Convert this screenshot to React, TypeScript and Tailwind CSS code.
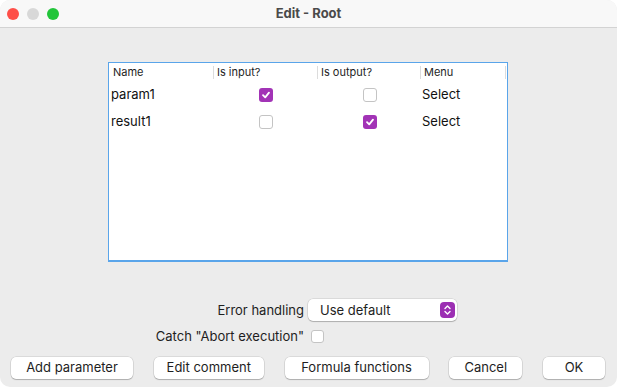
import React from "react";

const font = { fontFamily: "Inter, 'Open Sans', 'Liberation Sans', sans-serif" };

function Check({ checked }: { checked: boolean }) {
  if (checked) {
    return (
      <div className="w-[14px] h-[14px] rounded-[3px] bg-[#a233b6] flex items-center justify-center">
        <svg width="10" height="10" viewBox="0 0 10 10">
          <path d="M2 5.2 L4.2 7.4 L8 2.6" fill="none" stroke="white" strokeWidth="1.8" strokeLinecap="round" strokeLinejoin="round" />
        </svg>
      </div>
    );
  }
  return <div className="w-[14px] h-[14px] rounded-[3px] bg-white border border-[#c4c4c4]" />;
}

function Btn({ label, w }: { label: string; w: string }) {
  return (
    <div
      className={`${w} h-[22px] bg-white rounded-[5px] flex items-center justify-center text-[13px] text-[#1e1e1e] shadow-[0_0_0_0.5px_rgba(0,0,0,0.15),0_1px_1px_rgba(0,0,0,0.2)]`}
    >
      {label}
    </div>
  );
}

export default function App() {
  const rows = [
    { name: "param1", input: true, output: false },
    { name: "result1", input: false, output: true },
  ];
  return (
    <div className="w-[617px] h-[387px] bg-white" style={font}>
      <div className="w-full h-full rounded-[10px] overflow-hidden bg-[#ececec] flex flex-col">
        <div className="h-[28px] bg-[#f8f8f8] border-b border-[#d3d3d3] flex items-center relative shrink-0">
          <div className="flex items-center gap-[8px] pl-[7px]">
            <div className="w-[12px] h-[12px] rounded-full bg-[#fe4f48]" />
            <div className="w-[12px] h-[12px] rounded-full bg-[#d8d8d8]" />
            <div className="w-[12px] h-[12px] rounded-full bg-[#22c53a]" />
          </div>
          <div className="absolute inset-0 flex items-center justify-center text-[13px] font-bold text-[#4a4a4a]">
            Edit - Root
          </div>
        </div>

        <div className="pl-[108px] pt-[34px]">
          <div className="w-[400px] h-[200px] bg-white border border-[#5aa5ea] border-b-2 flex flex-col">
            <div className="h-[17px] pt-[1px] flex items-center text-[11px] text-[#1e1e1e]">
              <div className="w-[104px] pl-[4px]">Name</div>
              <div className="w-[104px] pl-[3px] border-l border-[#dcdcdc] h-[13px] leading-[13px]">Is input?</div>
              <div className="w-[103px] pl-[3px] border-l border-[#dcdcdc] h-[13px] leading-[13px]">Is output?</div>
              <div className="w-[86px] pl-[3px] border-l border-r border-[#dcdcdc] h-[13px] leading-[13px]">Menu</div>
            </div>
            {rows.map((r) => (
              <div key={r.name} className="h-[27px] pt-[3px] flex items-center text-[13px] text-[#111]">
                <div className="w-[104px] pl-[2px]">{r.name}</div>
                <div className="w-[104px] flex justify-center pl-[2px]">
                  <Check checked={r.input} />
                </div>
                <div className="w-[103px] flex justify-center pl-[2px]">
                  <Check checked={r.output} />
                </div>
                <div className="w-[86px] pl-[2px]">Select</div>
              </div>
            ))}
          </div>
        </div>

        <div className="mt-[37px] grid grid-cols-[304px_auto] gap-x-[4px] gap-y-[7px] items-center text-[13px] leading-[16px] text-[#1e1e1e]">
          <div className="text-right">Error handling</div>
          <div className="w-[149px] h-[22px] bg-white rounded-[5px] flex items-center justify-between pl-[12px] pr-[2px] shadow-[0_0_0_0.5px_rgba(0,0,0,0.15),0_1px_1px_rgba(0,0,0,0.2)]">
            <span>Use default</span>
            <div className="w-[15px] h-[16px] rounded-[4px] bg-[#9c2fb3] flex items-center justify-center">
              <svg width="9" height="12" viewBox="0 0 9 12">
                <path d="M2 4.5 L4.5 2 L7 4.5 M2 7.5 L4.5 10 L7 7.5" fill="none" stroke="white" strokeWidth="1.4" strokeLinecap="round" strokeLinejoin="round" />
              </svg>
            </div>
          </div>
          <div className="text-right h-[16px]">Catch "Abort execution"</div>
          <div className="pl-[3px] h-[16px] flex items-center">
            <div className="w-[13px] h-[13px] rounded-[3px] bg-white border border-[#c4c4c4]" />
          </div>
        </div>

        <div className="mt-[13px] flex justify-between pl-[11px] pr-[12px]">
          <Btn label="Add parameter" w="w-[122px]" />
          <Btn label="Edit comment" w="w-[110px]" />
          <Btn label="Formula functions" w="w-[144px]" />
          <Btn label="Cancel" w="w-[73px]" />
          <Btn label="OK" w="w-[62px]" />
        </div>
      </div>
    </div>
  );
}
